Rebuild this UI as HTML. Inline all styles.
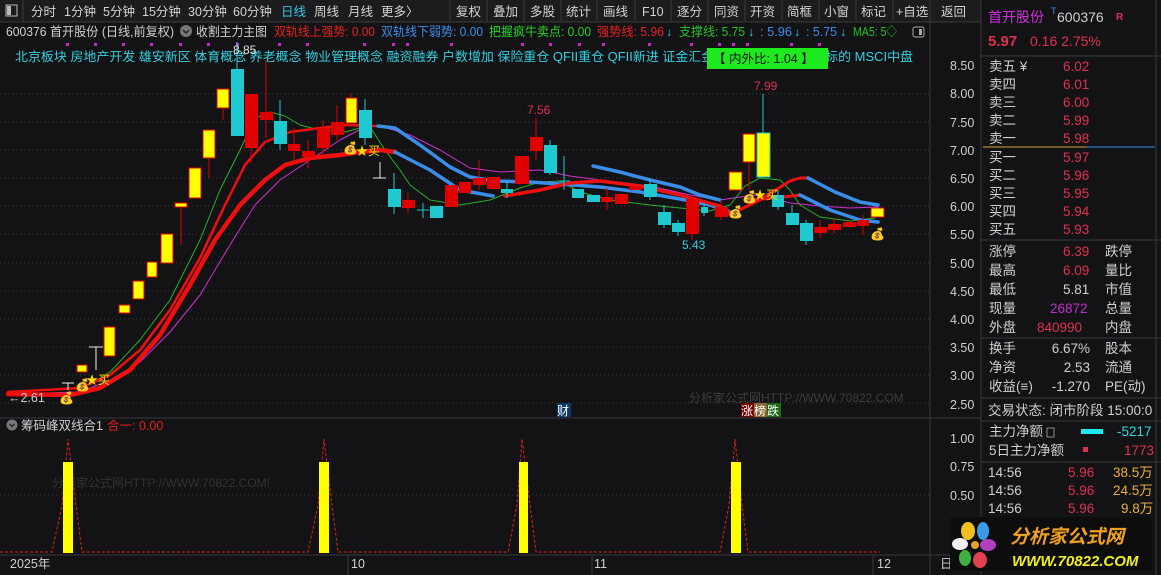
<!DOCTYPE html>
<html><head><meta charset="utf-8"><style>
*{margin:0;padding:0}
body{width:1161px;height:575px;background:#131315;overflow:hidden;font-family:"Liberation Sans","Noto Sans CJK SC",sans-serif}
svg{display:block}
text{font-family:"Liberation Sans","Noto Sans CJK SC",sans-serif}
</style></head><body>
<svg width="1161" height="575" viewBox="0 0 1161 575" xmlns="http://www.w3.org/2000/svg">
<rect width="1161" height="575" fill="#131315"/>
<!-- toolbar -->
<rect x="0" y="0" width="981" height="22" fill="#1c1c1f"/>
<line x1="0" y1="22" x2="981" y2="22" stroke="#3a3a3e"/>
<rect x="6" y="5" width="11" height="11" fill="none" stroke="#bbb"/><rect x="7" y="6" width="4" height="9" fill="#bbb"/>
<line x1="23" y1="0" x2="23" y2="22" stroke="#3a3a3e"/>
<g font-size="12.5" fill="#d4d4d4">
<text x="31" y="16">分时</text><text x="64" y="16">1分钟</text><text x="103" y="16">5分钟</text><text x="142" y="16">15分钟</text><text x="188" y="16">30分钟</text><text x="233" y="16">60分钟</text>
<text x="281" y="16" fill="#36c8e8">日线</text><text x="314" y="16">周线</text><text x="348" y="16">月线</text><text x="381" y="16">更多〉</text>
<text x="456" y="16">复权</text><text x="493" y="16">叠加</text><text x="530" y="16">多股</text><text x="566" y="16">统计</text><text x="603" y="16">画线</text><text x="642" y="16">F10</text><text x="677" y="16">逐分</text><text x="714" y="16">同资</text><text x="750" y="16">开资</text><text x="787" y="16">简框</text><text x="824" y="16">小窗</text><text x="861" y="16">标记</text><text x="896" y="16">+自选</text><text x="941" y="16">返回</text>
</g>
<g stroke="#3a3a3e"><line x1="450" y1="0" x2="450" y2="22"/><line x1="487" y1="0" x2="487" y2="22"/><line x1="524" y1="0" x2="524" y2="22"/><line x1="561" y1="0" x2="561" y2="22"/><line x1="597" y1="0" x2="597" y2="22"/><line x1="635" y1="0" x2="635" y2="22"/><line x1="671" y1="0" x2="671" y2="22"/><line x1="708" y1="0" x2="708" y2="22"/><line x1="745" y1="0" x2="745" y2="22"/><line x1="782" y1="0" x2="782" y2="22"/><line x1="819" y1="0" x2="819" y2="22"/><line x1="856" y1="0" x2="856" y2="22"/><line x1="893" y1="0" x2="893" y2="22"/><line x1="930" y1="0" x2="930" y2="22"/></g>
<!-- header row -->
<g font-size="12.5">
<text x="6" y="36" fill="#d0d0d0" textLength="168" lengthAdjust="spacingAndGlyphs">600376 首开股份 (日线,前复权)</text>
<circle cx="186" cy="31" r="6" fill="#777"/><path d="M183 30l3 3 3-3" stroke="#222" fill="none" stroke-width="1.4"/>
<text x="196" y="36" fill="#d0d0d0" textLength="71" lengthAdjust="spacingAndGlyphs">收割主力主图</text>
<text x="274" y="36" fill="#e82020" textLength="101" lengthAdjust="spacingAndGlyphs">双轨线上强势: 0.00</text>
<text x="381" y="36" fill="#3a8de8" textLength="102" lengthAdjust="spacingAndGlyphs">双轨线下弱势: 0.00</text>
<text x="489" y="36" fill="#28d028" textLength="102" lengthAdjust="spacingAndGlyphs">把握疯牛卖点: 0.00</text>
<text x="597" y="36" fill="#e82020" textLength="67" lengthAdjust="spacingAndGlyphs">强势线: 5.96</text><text x="666" y="36" fill="#36c8e8">↓</text>
<text x="679" y="36" fill="#28c028" textLength="66" lengthAdjust="spacingAndGlyphs">支撑线: 5.75</text><text x="748" y="36" fill="#36c8e8">↓</text>
<text x="760" y="36" fill="#3a8de8" textLength="32" lengthAdjust="spacingAndGlyphs">: 5.96</text><text x="794" y="36" fill="#36c8e8">↓</text>
<text x="806" y="36" fill="#3a8de8" textLength="31" lengthAdjust="spacingAndGlyphs">: 5.75</text><text x="840" y="36" fill="#36c8e8">↓</text>
<text x="853" y="36" fill="#28c028" textLength="44" lengthAdjust="spacingAndGlyphs">MA5: 5◇</text>
</g>
<rect x="913" y="27" width="11" height="10" rx="2" fill="none" stroke="#aaa"/><rect x="919" y="29" width="3" height="6" fill="#aaa"/>
<g fill="#d020d0"><rect x="66" y="43" width="3" height="3"/><rect x="94" y="43" width="3" height="3"/><rect x="122" y="43" width="3" height="3"/><rect x="150" y="43" width="3" height="3"/><rect x="179" y="43" width="3" height="3"/><rect x="207" y="43" width="3" height="3"/><rect x="236" y="43" width="3" height="3"/><rect x="278" y="43" width="3" height="3"/><rect x="306" y="43" width="3" height="3"/><rect x="363" y="43" width="3" height="3"/><rect x="392" y="43" width="3" height="3"/><rect x="406" y="43" width="3" height="3"/><rect x="450" y="43" width="3" height="3"/><rect x="521" y="43" width="3" height="3"/><rect x="549" y="43" width="3" height="3"/><rect x="578" y="43" width="3" height="3"/><rect x="602" y="43" width="3" height="3"/><rect x="648" y="43" width="3" height="3"/><rect x="690" y="43" width="3" height="3"/><rect x="718" y="43" width="3" height="3"/><rect x="732" y="43" width="3" height="3"/><rect x="746" y="43" width="3" height="3"/><rect x="790" y="43" width="3" height="3"/><rect x="818" y="43" width="3" height="3"/></g>
<text x="15" y="61" font-size="12.5" fill="#36d0e0" textLength="898" lengthAdjust="spacingAndGlyphs">北京板块 房地产开发 雄安新区 体育概念 养老概念 物业管理概念  融资融券 户数增加 保险重仓 QFII重仓 QFII新进 证金汇金持股 社保重仓 融资标的 MSCI中盘</text>
<rect x="707" y="48" width="121" height="21" fill="#1ee81e"/>
<text x="713" y="63" font-size="12.5" fill="#111">【 内外比: 1.04 】</text>
<!-- grid -->
<g stroke="#3a3a3a" stroke-dasharray="1 3">
<line x1="0" y1="94" x2="930" y2="94"/><line x1="0" y1="122" x2="930" y2="122"/><line x1="0" y1="150" x2="930" y2="150"/><line x1="0" y1="178" x2="930" y2="178"/><line x1="0" y1="206" x2="930" y2="206"/><line x1="0" y1="234" x2="930" y2="234"/><line x1="0" y1="263" x2="930" y2="263"/><line x1="0" y1="291" x2="930" y2="291"/><line x1="0" y1="319" x2="930" y2="319"/><line x1="0" y1="347" x2="930" y2="347"/><line x1="0" y1="375" x2="930" y2="375"/><line x1="0" y1="403" x2="930" y2="403"/>
<line x1="0" y1="495" x2="930" y2="495"/>
</g>
<!-- axis -->
<line x1="930" y1="22" x2="930" y2="575" stroke="#3a3a3e"/>
<line x1="981" y1="0" x2="981" y2="575" stroke="#3a3a3e"/>
<line x1="0" y1="418" x2="981" y2="418" stroke="#3a3a3e"/>
<line x1="0" y1="555" x2="981" y2="555" stroke="#3a3a3e"/>
<g font-size="12.5" fill="#d0d0d0">
<text x="950" y="70">8.50</text><text x="950" y="98">8.00</text><text x="950" y="127">7.50</text><text x="950" y="155">7.00</text><text x="950" y="183">6.50</text><text x="950" y="211">6.00</text><text x="950" y="239">5.50</text><text x="950" y="268">5.00</text><text x="950" y="296">4.50</text><text x="950" y="324">4.00</text><text x="950" y="352">3.50</text><text x="950" y="380">3.00</text><text x="950" y="409">2.50</text>
<text x="950" y="443">1.00</text><text x="950" y="471">0.75</text><text x="950" y="500">0.50</text>
</g>
<!-- lines -->
<g fill="none" stroke-linejoin="round" stroke-linecap="round">
<polyline stroke="#d030d0" stroke-width="1" points="8,394 80,392 110,380 140,362 170,332 200,295 230,245 255,205 280,180 310,160 340,140 365,127 380,126 410,135 440,150 470,168 500,172 540,170 570,176 600,180 650,186 690,195 720,200 740,197 760,195 790,203 820,206 850,208 878,207"/>
<polyline stroke="#28b028" stroke-width="1" points="90,385 110,372 140,340 170,300 200,240 220,190 240,150 255,118 270,112 285,116 300,125 320,130 345,132 360,128 372,130 385,150 400,170 410,185 430,200 460,205 490,200 520,188 540,182 560,181 580,192 610,200 650,205 690,209 710,211 730,205 745,186 760,178 780,180 790,190 800,205 820,217 850,221 875,218"/>
<polyline stroke="#ee1010" stroke-width="2.5" points="8,392 80,388 110,375 140,350 170,310 200,258 225,205 245,165 265,142 290,132 320,128 345,125 375,126"/>
<polyline stroke="#ee1010" stroke-width="4.5" points="8,394 70,395 100,388 130,370 160,335 190,285 215,240 240,205 265,180 285,165 310,158 340,155 360,152 380,150 395,152"/>
<polyline stroke="#3a8de8" stroke-width="3.5" points="378,126 395,128 420,145 450,167 470,177 495,181 530,182 560,184 600,187 640,192 680,199 710,205 730,212"/>
<polyline stroke="#3a8de8" stroke-width="3.5" points="395,152 430,170 460,190 493,196"/>
<polyline stroke="#ee1010" stroke-width="3.5" points="505,196 540,190 570,183 600,181 640,186 680,195 720,206 730,214"/>
<polyline stroke="#3a8de8" stroke-width="3.5" points="593,166 620,172 650,180 680,187 700,195 720,200"/>
<polyline stroke="#ee1010" stroke-width="3" points="735,212 760,200 790,181 800,178 808,178"/>
<polyline stroke="#3a8de8" stroke-width="3.5" points="808,178 835,192 860,202 878,205"/>
<polyline stroke="#ee1010" stroke-width="3" points="748,200 775,198 800,195"/>
<polyline stroke="#3a8de8" stroke-width="3.5" points="800,195 830,210 860,220 878,222"/>
</g>
<!-- candles -->
<g fill="#ffff00" stroke="#e00000" stroke-width="1">
<rect x="77" y="365" width="10" height="7"/><rect x="104" y="327" width="11" height="29"/><rect x="119" y="305" width="11" height="8"/><rect x="133" y="281" width="11" height="18"/><rect x="147" y="262" width="10" height="15"/><rect x="161" y="234" width="12" height="29"/><rect x="175" y="203" width="12" height="4"/><rect x="189" y="168" width="12" height="30"/><rect x="203" y="130" width="12" height="28"/><rect x="217" y="89" width="12" height="19"/><rect x="346" y="98" width="11" height="25"/><rect x="729" y="172" width="13" height="18"/><rect x="743" y="134" width="12" height="28"/><rect x="871" y="208" width="13" height="9"/>
</g>
<rect x="757" y="133" width="13" height="44" fill="#ffff00" stroke="#20c8c8"/>
<g stroke="#e00000" stroke-width="1">
<line x1="181" y1="207" x2="181" y2="245"/><line x1="209" y1="158" x2="209" y2="178"/><line x1="223" y1="108" x2="223" y2="120"/><line x1="251" y1="148" x2="251" y2="163"/><line x1="266" y1="60" x2="266" y2="138"/><line x1="294" y1="128" x2="294" y2="163"/><line x1="308" y1="140" x2="308" y2="168"/><line x1="323" y1="120" x2="323" y2="155"/><line x1="337" y1="105" x2="337" y2="140"/><line x1="351" y1="93" x2="351" y2="98"/><line x1="408" y1="193" x2="408" y2="213"/><line x1="479" y1="160" x2="479" y2="190"/><line x1="536" y1="118" x2="536" y2="160"/><line x1="607" y1="188" x2="607" y2="210"/><line x1="692" y1="234" x2="692" y2="240"/><line x1="721" y1="200" x2="721" y2="220"/><line x1="749" y1="162" x2="749" y2="190"/><line x1="820" y1="220" x2="820" y2="238"/><line x1="834" y1="218" x2="834" y2="233"/><line x1="863" y1="215" x2="863" y2="235"/>
</g>
<g fill="#e00000">
<rect x="245" y="94" width="13" height="54"/><rect x="260" y="112" width="13" height="8"/><rect x="288" y="144" width="12" height="7"/><rect x="302" y="151" width="13" height="6"/><rect x="317" y="128" width="13" height="20"/><rect x="331" y="122" width="13" height="13"/><rect x="402" y="200" width="13" height="8"/><rect x="445" y="185" width="13" height="22"/><rect x="459" y="182" width="12" height="11"/><rect x="473" y="178" width="13" height="7"/><rect x="487" y="177" width="13" height="12"/><rect x="515" y="156" width="14" height="28"/><rect x="530" y="137" width="13" height="14"/><rect x="601" y="197" width="12" height="5"/><rect x="615" y="194" width="13" height="10"/><rect x="629" y="186" width="13" height="4"/><rect x="686" y="199" width="13" height="35"/><rect x="715" y="207" width="13" height="10"/><rect x="814" y="227" width="13" height="6"/><rect x="828" y="224" width="13" height="6"/><rect x="843" y="222" width="13" height="5"/><rect x="857" y="220" width="12" height="6"/>
</g>
<g stroke="#20c8d0" stroke-width="1">
<line x1="237" y1="42" x2="237" y2="69"/><line x1="280" y1="100" x2="280" y2="150"/><line x1="365" y1="99" x2="365" y2="145"/><line x1="394" y1="173" x2="394" y2="214"/><line x1="423" y1="203" x2="423" y2="218"/><line x1="507" y1="182" x2="507" y2="198"/><line x1="550" y1="140" x2="550" y2="175"/><line x1="564" y1="156" x2="564" y2="190"/><line x1="664" y1="205" x2="664" y2="228"/><line x1="678" y1="220" x2="678" y2="236"/><line x1="704" y1="203" x2="704" y2="216"/><line x1="763" y1="94" x2="763" y2="133"/><line x1="778" y1="190" x2="778" y2="210"/><line x1="792" y1="205" x2="792" y2="225"/><line x1="806" y1="220" x2="806" y2="245"/><line x1="650" y1="178" x2="650" y2="200"/>
<line x1="558" y1="181" x2="570" y2="181"/><line x1="417" y1="210" x2="429" y2="210"/>
</g>
<g fill="#20c8d0">
<rect x="231" y="69" width="13" height="67"/><rect x="274" y="121" width="13" height="23"/><rect x="359" y="110" width="13" height="28"/><rect x="388" y="189" width="13" height="18"/><rect x="430" y="206" width="13" height="12"/><rect x="501" y="189" width="12" height="4"/><rect x="544" y="145" width="13" height="28"/><rect x="572" y="189" width="12" height="9"/><rect x="587" y="195" width="13" height="7"/><rect x="644" y="184" width="13" height="13"/><rect x="658" y="212" width="13" height="13"/><rect x="672" y="223" width="13" height="9"/><rect x="701" y="207" width="7" height="6"/><rect x="772" y="195" width="12" height="12"/><rect x="786" y="213" width="13" height="12"/><rect x="800" y="223" width="13" height="18"/>
</g>
<g stroke="#eee" stroke-width="1">
<line x1="96" y1="347" x2="96" y2="370"/><line x1="89" y1="347" x2="103" y2="347"/>
<line x1="68" y1="383" x2="68" y2="390"/><line x1="62" y1="383" x2="74" y2="383"/>
<line x1="380" y1="162" x2="380" y2="178"/><line x1="373" y1="178" x2="386" y2="178"/>
</g>
<!-- markers -->
<g font-size="12">
<text x="75" y="389">💰</text><text x="59" y="402">💰</text><text x="343" y="152">💰</text><text x="742" y="201">💰</text><text x="728" y="216">💰</text><text x="870" y="238">💰</text>
</g>
<g fill="#ffe000" font-size="12"><text x="86" y="384">★买</text><text x="356" y="155">★买</text><text x="754" y="199">★买</text></g>
<text x="233" y="54" font-size="12" fill="#e0e0e0">8.85</text>
<text x="527" y="114" font-size="12" fill="#e03050">7.56</text>
<text x="754" y="90" font-size="12" fill="#e03050">7.99</text>
<text x="682" y="249" font-size="12" fill="#30d0e0">5.43</text>
<text x="8" y="402" font-size="12.5" fill="#ccc">←2.61</text>
<text x="689" y="402" font-size="12" fill="#3e3e3e">分析家公式网HTTP://WWW.70822.COM</text>
<rect x="557" y="403" width="14" height="14" fill="#0a3a6a"/><text x="557" y="415" font-size="12" fill="#fff">财</text>
<rect x="741" y="403" width="13" height="14" fill="#700"/><text x="741" y="415" font-size="12" fill="#fff">涨</text>
<rect x="754" y="403" width="13" height="14" fill="#863"/><text x="754" y="415" font-size="12" fill="#fff">榜</text>
<rect x="767" y="403" width="14" height="14" fill="#1a6a1a"/><text x="767" y="415" font-size="12" fill="#fff">跌</text>
<!-- lower pane -->
<circle cx="12" cy="425" r="5.5" fill="#777"/><path d="M9.5 424l2.5 2.5 2.5-2.5" stroke="#222" fill="none" stroke-width="1.3"/>
<text x="21" y="430" font-size="12.5" fill="#d0d0d0">筹码峰双线合1</text>
<text x="107" y="430" font-size="12.5" fill="#e02020">合一: 0.00</text>
<text x="52" y="487" font-size="12" fill="#333">分析家公式网HTTP://WWW.70822.COM!</text>
<polyline fill="none" stroke="#e02020" stroke-dasharray="3 2" points="0,552 52,552 62,505 68,439 76,505 82,552 308,552 318,505 324,439 332,505 338,552 508,552 517,505 522,439 530,505 536,552 720,552 729,505 735,439 742,505 748,552 880,552"/>
<g fill="#ffff00"><rect x="63" y="462" width="10" height="91"/><rect x="319" y="462" width="10" height="91"/><rect x="519" y="462" width="9" height="91"/><rect x="731" y="462" width="10" height="91"/></g>
<g font-size="12.5" fill="#d0d0d0"><text x="10" y="568">2025年</text><text x="351" y="568">10</text><text x="594" y="568">11</text><text x="877" y="568">12</text><text x="940" y="568">日</text></g>
<g stroke="#3a3a3e"><line x1="348" y1="555" x2="348" y2="575"/><line x1="592" y1="555" x2="592" y2="575"/><line x1="873" y1="555" x2="873" y2="575"/></g>
<!-- right panel -->
<text x="988" y="22" font-size="14" fill="#d030e0">首开股份</text>
<text x="1051" y="14" font-size="9" fill="#3a8de8">T</text>
<text x="1057" y="22" font-size="14" fill="#d0d0d0">600376</text>
<text x="1116" y="20" font-size="10" font-weight="bold" fill="#e03050">R</text>
<text x="988" y="46" font-size="15" font-weight="bold" fill="#e03050">5.97</text>
<text x="1030" y="46" font-size="14" fill="#e03050">0.16  2.75%</text>
<line x1="981" y1="56" x2="1161" y2="56" stroke="#3a3a3e"/>
<g font-size="13.5" fill="#d0d0d0">
<text x="989" y="71">卖五 ¥</text><text x="989" y="89">卖四</text><text x="989" y="107">卖三</text><text x="989" y="125">卖二</text><text x="989" y="143">卖一</text>
<text x="989" y="162">买一</text><text x="989" y="180">买二</text><text x="989" y="198">买三</text><text x="989" y="216">买四</text><text x="989" y="234">买五</text>
<text x="989" y="256">涨停</text><text x="989" y="275">最高</text><text x="989" y="294">最低</text><text x="989" y="313">现量</text><text x="989" y="332">外盘</text>
<text x="1105" y="256">跌停</text><text x="1105" y="275">量比</text><text x="1105" y="294">市值</text><text x="1105" y="313">总量</text><text x="1105" y="332">内盘</text>
<text x="989" y="353">换手</text><text x="989" y="372">净资</text><text x="989" y="391">收益(≡)</text>
<text x="1105" y="353">股本</text><text x="1105" y="372">流通</text><text x="1105" y="391">PE(动)</text>
<text x="988" y="415">交易状态: 闭市阶段 15:00:0</text>
<text x="989" y="436">主力净额</text><text x="989" y="455">5日主力净额</text>
<text x="988" y="477">14:56</text><text x="988" y="495">14:56</text><text x="988" y="513">14:56</text>
</g>
<g font-size="13.5" fill="#e03050">
<text x="1063" y="71">6.02</text><text x="1063" y="89">6.01</text><text x="1063" y="107">6.00</text><text x="1063" y="125">5.99</text><text x="1063" y="143">5.98</text>
<text x="1063" y="162">5.97</text><text x="1063" y="180">5.96</text><text x="1063" y="198">5.95</text><text x="1063" y="216">5.94</text><text x="1063" y="234">5.93</text>
<text x="1063" y="256">6.39</text><text x="1063" y="275">6.09</text>
<text x="1037" y="332">840990</text>
<text x="1124" y="455">1773</text>
<text x="1068" y="477">5.96</text><text x="1068" y="495">5.96</text><text x="1068" y="513">5.96</text>
</g>
<text x="1063" y="294" font-size="13.5" fill="#d0d0d0">5.81</text>
<text x="1050" y="313" font-size="13.5" fill="#c030d0">26872</text>
<g font-size="13.5" fill="#d0d0d0" text-anchor="end"><text x="1090" y="353">6.67%</text><text x="1090" y="372">2.53</text><text x="1090" y="391">-1.270</text></g>
<text x="1117" y="436" font-size="13.5" fill="#30d8e0">-5217</text>
<g font-size="13.5" fill="#e8b040"><text x="1113" y="477">38.5万</text><text x="1113" y="495">24.5万</text><text x="1121" y="513">9.8万</text></g>
<rect x="1047" y="428" width="7" height="9" fill="none" stroke="#888"/>
<rect x="1081" y="429" width="22" height="5" fill="#20e8f0"/>
<rect x="1083" y="447" width="5" height="5" fill="#e03050"/>
<line x1="983" y1="147" x2="1087" y2="147" stroke="#d8a040"/><line x1="1087" y1="147" x2="1155" y2="147" stroke="#3a8de8"/>
<g stroke="#3a3a3e"><line x1="981" y1="240" x2="1161" y2="240"/><line x1="981" y1="338" x2="1161" y2="338"/><line x1="981" y1="398" x2="1161" y2="398"/><line x1="981" y1="421" x2="1161" y2="421"/><line x1="981" y1="462" x2="1161" y2="462"/></g>
<line x1="1156" y1="0" x2="1156" y2="575" stroke="#3a3a3e"/>
<!-- logo -->
<rect x="950" y="517" width="202" height="54" fill="#0d0d0d"/>
<g><ellipse cx="968" cy="531" rx="7" ry="9" fill="#f0c020"/><ellipse cx="983" cy="531" rx="6" ry="9" fill="#3a9ae8"/><ellipse cx="988" cy="545" rx="8" ry="6" fill="#b040c0"/><ellipse cx="980" cy="560" rx="7" ry="8" fill="#e04050"/><ellipse cx="965" cy="558" rx="6" ry="8" fill="#40b040"/><ellipse cx="960" cy="544" rx="8" ry="6" fill="#f0f0f0"/><circle cx="975" cy="545" r="4" fill="#e8a030"/></g>
<text x="1010" y="543" font-size="19" font-weight="bold" font-style="italic" fill="#f0a020">分析家公式网</text>
<text x="1012" y="566" font-size="15" font-weight="bold" font-style="italic" fill="#f0f020">WWW.70822.COM</text>
</svg>
</body></html>
